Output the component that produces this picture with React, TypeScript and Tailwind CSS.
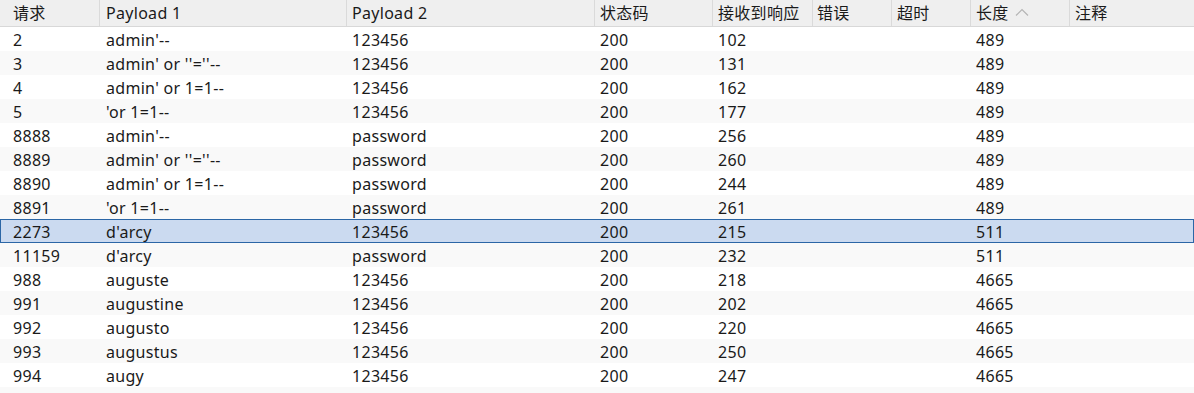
const FONT = { fontFamily: '"Noto Sans", "Noto Sans CJK SC", sans-serif' }

const COLS = [
  { label: '请求', w: 'w-[100px]', pad: 'pl-[13px]' },
  { label: 'Payload 1', w: 'w-[247px]', pad: 'pl-[6px]' },
  { label: 'Payload 2', w: 'w-[248px]', pad: 'pl-[5px]' },
  { label: '状态码', w: 'w-[118px]', pad: 'pl-[5px]' },
  { label: '接收到响应', w: 'w-[100px]', pad: 'pl-[5px]' },
  { label: '错误', w: 'w-[79px]', pad: 'pl-[4px]' },
  { label: '超时', w: 'w-[79px]', pad: 'pl-[5px]' },
  { label: '长度', w: 'w-[99px]', pad: 'pl-[5px]' },
  { label: '注释', w: 'flex-1', pad: 'pl-[5px]' },
]

const ROWS: string[][] = [
  ['2', "admin'--", '123456', '200', '102', '', '', '489', ''],
  ['3', "admin' or ''=''--", '123456', '200', '131', '', '', '489', ''],
  ['4', "admin' or 1=1--", '123456', '200', '162', '', '', '489', ''],
  ['5', "'or 1=1--", '123456', '200', '177', '', '', '489', ''],
  ['8888', "admin'--", 'password', '200', '256', '', '', '489', ''],
  ['8889', "admin' or ''=''--", 'password', '200', '260', '', '', '489', ''],
  ['8890', "admin' or 1=1--", 'password', '200', '244', '', '', '489', ''],
  ['8891', "'or 1=1--", 'password', '200', '261', '', '', '489', ''],
  ['2273', "d'arcy", '123456', '200', '215', '', '', '511', ''],
  ['11159', "d'arcy", 'password', '200', '232', '', '', '511', ''],
  ['988', 'auguste', '123456', '200', '218', '', '', '4665', ''],
  ['991', 'augustine', '123456', '200', '202', '', '', '4665', ''],
  ['992', 'augusto', '123456', '200', '220', '', '', '4665', ''],
  ['993', 'augustus', '123456', '200', '250', '', '', '4665', ''],
  ['994', 'augy', '123456', '200', '247', '', '', '4665', ''],
  ['', '', '', '', '', '', '', '', ''],
]

const SELECTED = 8

export default function App() {
  return (
    <div className="w-[1194px] h-[393px] overflow-hidden bg-white text-[16px] tracking-[0.3px] text-[#1a1a1a]" style={FONT}>
      <div className="flex h-[27px] bg-[#efefef] border-b border-[#d8d8d8]">
        {COLS.map((c, i) => (
          <div
            key={c.label}
            className={`${c.w} ${c.pad} flex items-center shrink-0 ${i < COLS.length - 1 ? 'border-r border-[#dadada]' : ''}`}
          >
            <span>{c.label}</span>
            {c.label === '长度' && (
              <svg width="14" height="8" viewBox="0 0 14 8" className="ml-[6px] mt-[-3px]">
                <path d="M1 7.5 L7 1.5 L13 7.5" fill="none" stroke="#b4b4b4" strokeWidth="1.2" />
              </svg>
            )}
          </div>
        ))}
      </div>
      {ROWS.map((r, ri) => {
        const sel = ri === SELECTED
        const bg = sel ? 'bg-[#cbdaf0] border border-[#2b66a6]' : ri % 2 === 0 ? 'bg-white' : 'bg-[#f9f9f9]'
        return (
          <div key={ri} className={`flex h-[24px] ${bg}`}>
            {COLS.map((c, ci) => (
              <div
                key={ci}
                className={`${c.w} ${c.pad} shrink-0 flex items-center whitespace-nowrap pt-[1px] ${sel && ci === 0 ? 'ml-[-1px]' : ''}`}
              >
                {r[ci]}
              </div>
            ))}
          </div>
        )
      })}
    </div>
  )
}
